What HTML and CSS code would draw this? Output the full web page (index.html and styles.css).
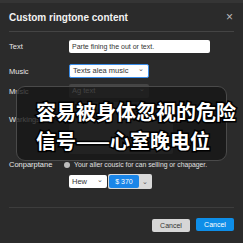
FILE: index.html
```html
<!DOCTYPE html>
<html lang="en">
<head>
    <meta charset="UTF-8">
    <title>Custom ringtone content</title>
    <link rel="stylesheet" href="styles.css">
</head>
<body>

    <div class="dialog">
        <div class="title-row">
            <h1>Custom ringtone content</h1>
            <span class="close">&times;</span>
        </div>

        <div class="form">
            <div class="row row-text">
                <label>Text</label>
                <div class="input">Parte fining the out or text.</div>
            </div>
            <div class="row row-music">
                <label>Music</label>
                <div class="select focus">Texts alea music <span class="chev">&#8964;</span></div>
            </div>
            <div class="row row-music2">
                <label>Music</label>
                <div class="select dark">Ag text <span class="chev">&#8964;</span></div>
            </div>
            <div class="row row-work">
                <label>Warkings</label>
                <div class="textarea"></div>
            </div>
            <div class="row row-comp">
                <label>Conparptane</label>
                <div class="radio-line"><span class="radio"></span>Your aller cousic for can selling or chapager.</div>
            </div>
            <div class="row row-price">
                <label></label>
                <div class="price">
                    <div class="select small">Hew <span class="chev">&#8964;</span></div>
                    <div class="combo"><span class="amount">$ 370</span><span class="chev">&#8964;</span></div>
                </div>
            </div>
        </div>

        <div class="footer">
            <button class="btn">Cancel</button>
            <button class="btn primary">Cancel</button>
        </div>

        <div class="caption">
            <p>容易被身体忽视的危险</p>
            <p>信号——心室晚电位</p>
        </div>
    </div>

</body>
</html>
```

FILE: styles.css
```css
body {
    margin: 0;
    background: #2b2b2b;
    font-family: 'Liberation Sans', Arial, sans-serif;
    color: #e8e8e8;
}

.dialog {
    position: relative;
    width: 243px;
    height: 243px;
    box-sizing: border-box;
    padding: 0 9px;
    border-top: 3px solid #353535;
    overflow: hidden;
}

.title-row {
    display: flex;
    justify-content: space-between;
    align-items: center;
    height: 28px;
    border-bottom: 1px solid #444;
}

h1 {
    margin: 0;
    font-size: 10px;
    font-weight: bold;
    color: #f2f2f2;
    padding-top: 1px;
}

.close {
    font-size: 12px;
    color: #bbb;
    margin-right: 1px;
}

.form {
    padding-top: 8px;
}

.row {
    display: grid;
    grid-template-columns: 60px 1fr;
    align-items: center;
}

label {
    font-size: 7.5px;
    color: #e6e6e6;
}

.input {
    width: 141px;
    height: 13px;
    box-sizing: border-box;
    background: #fff;
    border-radius: 2px;
    color: #333;
    font-size: 7px;
    line-height: 13px;
    padding-left: 3px;
}

.select {
    width: 80px;
    height: 14px;
    box-sizing: border-box;
    background: #fff;
    border-radius: 2px;
    color: #333;
    font-size: 7.5px;
    line-height: 12px;
    padding: 0 4px 0 3px;
    display: flex;
    justify-content: space-between;
}

.chev {
    font-size: 7px;
    line-height: 8px;
    color: #555;
}

.select.focus {
    border: 1px solid #3b8eea;
}

.select.dark {
    background: #454545;
    color: #ddd;
    line-height: 14px;
}

.select.dark .chev {
    color: #bbb;
    line-height: 9px;
}

.row-music {
    margin-top: 11px;
}

.row-music2 {
    margin-top: 6px;
}

.row-work {
    margin-top: 4px;
    align-items: start;
}

.row-work label {
    margin-top: 13px;
}

.textarea {
    width: 104px;
    height: 52px;
    background: #505050;
    border-radius: 2px;
}

.row-comp {
    margin-top: 6px;
    grid-template-columns: 55px 1fr;
}

.radio-line {
    font-size: 6.8px;
    color: #e0e0e0;
    display: flex;
    align-items: center;
    white-space: nowrap;
}

.radio {
    width: 6px;
    height: 6px;
    border-radius: 50%;
    background: #bdbdbd;
    margin-right: 4px;
}

.row-price {
    margin-top: 6px;
}

.price {
    display: flex;
    gap: 1px;
}

.select.small {
    width: 38px;
    height: 13px;
    line-height: 13px;
    font-size: 7.5px;
}

.select.small .chev {
    line-height: 9px;
}

.combo {
    display: flex;
    align-items: center;
    height: 15px;
    width: 44px;
    box-sizing: border-box;
    margin-top: -1px;
    background: #d9d9d9;
    border-radius: 2px;
    padding: 1px;
}

.amount {
    background: #1b86e8;
    color: #fff;
    font-size: 7px;
    width: 30px;
    height: 13px;
    line-height: 13px;
    text-align: center;
    border-radius: 2px;
}

.combo .chev {
    flex: 1;
    text-align: center;
    line-height: 6px;
}

.footer {
    margin-top: 18px;
    border-top: 1px solid #3d3d3d;
    padding-top: 11px;
    display: flex;
    justify-content: flex-end;
    gap: 6px;
}

.btn {
    width: 38px;
    height: 13px;
    border: none;
    border-radius: 2px;
    background: #d6d6d6;
    color: #333;
    font-family: 'Liberation Sans', Arial, sans-serif;
    font-size: 7px;
    padding: 0;
}

.btn.primary {
    background: #0e8ee8;
    color: #fff;
    margin-top: -1px;
}

.caption {
    position: absolute;
    left: 16px;
    top: 83px;
    width: 211px;
    height: 75px;
    box-sizing: border-box;
    background: rgba(22, 22, 22, 0.78);
    border: 1px solid #4a4a4a;
    border-radius: 9px;
    padding: 10px 0 0 19px;
    white-space: nowrap;
}

.caption p {
    margin: 0;
    font-family: 'Noto Sans CJK SC', sans-serif;
    font-weight: bold;
    font-size: 20px;
    line-height: 29px;
    color: #fff;
    -webkit-text-stroke: 3px #000;
    paint-order: stroke fill;
}
```
